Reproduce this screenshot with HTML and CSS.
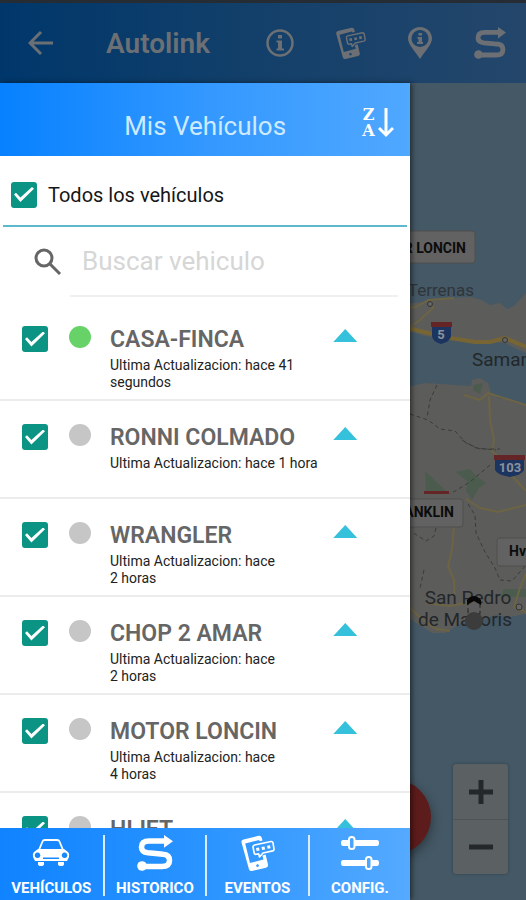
FILE: index.html
```html
<!DOCTYPE html>
<html lang="es">
<head>
    <meta charset="UTF-8">
    <meta name="viewport" content="width=device-width, initial-scale=1.0">
    <title>Autolink - Mis Vehículos</title>
    <link rel="stylesheet" href="styles.css">
</head>
<body>
    <!-- Shared icons -->
    <svg class="sprite" aria-hidden="true">
        <symbol id="icon-phone" viewBox="0 0 36 36">
            <path fill="currentColor" fill-rule="evenodd" d="M4.500 4.500 L19.500 .8 Q22 .3 22.700 2.500 L23.500 5.500 L20.500 6.300 L20.200 5 L6.200 8.600 L11 28 L24.500 24.600 L23.400 20.500 L26.600 19.500 L29 29.500 Q29.500 32 27 32.700 L13 36 Q10.500 36.400 9.900 34 L2.500 7.500 Q2 5.200 4.500 4.500 Z M18.500 29.200 a1.400 1.400 0 1 0 .1 0 Z"/>
            <path fill="none" stroke="currentColor" stroke-width="1.600" stroke-linejoin="round" d="M15.500 10 L32 6.500 Q33.600 6.300 34 7.800 L35 14 Q35.200 15.500 33.700 15.900 L24 18 L20.500 22 L19.700 18.900 L17 19.300 Q15.500 19.500 15.200 18 L14 12 Q13.800 10.500 15.500 10 Z"/>
            <path fill="currentColor" d="M17 13 l3 -.6 .6 3 -3 .6 Z M22.500 12 l3 -.6 .6 3 -3 .6 Z M28 10.800 l3 -.6 .6 3 -3 .6 Z"/>
        </symbol>
        <symbol id="icon-route" viewBox="0 0 36 36">
            <path fill="none" stroke="currentColor" stroke-width="5.500" d="M5 31.500 H25 Q32.500 31.500 32.500 25.500 Q32.500 19.500 26 19.200 L11 17.800 Q4.500 17 4.500 12.200 Q4.500 6 12 6 H29"/>
            <circle cx="5" cy="31" r="4.800" fill="currentColor"/>
            <path fill="currentColor" d="M27 0 L36 6.200 L27 12.800 Z"/>
        </symbol>
    </svg>

    <header class="topbar">
        <button class="icon-btn back" aria-label="Volver">
            <svg viewBox="0 0 26 26"><path d="M25 13 H2 M13 2 L2 13 L13 24"/></svg>
        </button>
        <h1>Autolink</h1>
        <nav class="actions">
            <button class="icon-btn" aria-label="Información">
                <svg viewBox="0 0 32 32">
                    <circle cx="16" cy="16" r="12.500" fill="none" stroke="currentColor" stroke-width="2.500"/>
                    <path fill="currentColor" d="M14 8 h4 v3.500 h-4 Z M12.500 13.500 h5.500 v8 h2 v2 h-7.500 v-2 h1.500 v-6 h-1.500 Z"/>
                </svg>
            </button>
            <button class="icon-btn" aria-label="Mensajes"><svg><use href="#icon-phone"/></svg></button>
            <button class="icon-btn" aria-label="Ubicación">
                <svg viewBox="0 0 32 32">
                    <path fill="currentColor" fill-rule="evenodd" d="M16 0 C22.500 0 28 5 28 11.500 C28 18 20 25 16 32 C12 25 4 18 4 11.500 C4 5 9.500 0 16 0 Z M16 3 a8.500 8.500 0 1 0 .1 0 Z"/>
                    <path fill="currentColor" d="M14.500 6 h3.500 v2.500 h-3.500 Z M13.500 10 h4.500 v5 h1 v2 h-6 v-2 h1.500 v-3 h-1 Z"/>
                </svg>
            </button>
            <button class="icon-btn" aria-label="Recorrido"><svg><use href="#icon-route"/></svg></button>
        </nav>
    </header>

    <main class="content">
        <!-- Map behind the drawer -->
        <svg class="map" viewBox="0 83 526 817" preserveAspectRatio="xMaxYMin slice">
            <path class="land" d="M400 304 L412 303 L430 301 L450 298 L470 297 L482 300 L490 305 L500 303 L507 309 L514 306 L526 293 V353 L519 350 L505 343 L490 342 L478 344 L460 341 L440 338 L425 336 L412 332 L400 331 Z"/>
            <path class="land" d="M400 386 L412 386 L425 383 L440 384 L455 385 L471 386 L472 380 L480 378 L488 383 L491 393 L498 398 L515 401 L526 404 V614 L510 617 L496 615 L484 619 L468 620 L455 627 L445 633 L432 633 L421 626 L410 619 L400 614 Z"/>
            <path class="park" d="M425 471 L446 491 H426 Z M456 472 L470 469 L477 477 L486 483 L479 488 L472 500 L466 490 L468 482 Z M474 385 L483 383 L480 394 L473 390 Z M504 589 H526 V597 H500 Z"/>
            <path class="road" d="M400 326 L420 331 L450 338 L475 342 L490 342 L505 338 L526 347"/>
            <path class="road thin" d="M400 309 L416 307 L428 300 L454 298 M431 300 L433 308 L420 320 L408 328 M464 395 L480 400 L488 393 L526 405 M489 396 L490 420 L494 440 L492 452 L502 458 L512 476 L526 491 M466 499 L480 508 L498 512 L526 505 M454 526 L452 550 L448 566 L454 580 L455 606 M400 597 L414 612 L426 622 L436 629 L450 631 M426 603 L450 606 L470 602 M526 574 L520 588 L514 607 L526 612"/>
            <path class="border-line" d="M410 414 L428 420 L440 429 L455 431 L466 443 L480 449 L500 449 M437 385 L430 400 L427 418 M462 440 L476 448 L496 450 M490 465 L470 482 L450 494 M468 504 L475 515 L476 533 L485 552 L495 568 L500 580 L512 581 L526 565 M436 528 L434 536 L426 541 L412 532 M424 570 L420 588"/>
            <g class="town">
                <circle cx="430" cy="304" r="2.500"/>
                <circle cx="505" cy="340" r="2.500"/>
                <circle cx="519" cy="607" r="3"/>
            </g>
            <!-- Road shields -->
            <g class="shield">
                <path class="shield-blue" d="M432 326 H451 V336 Q451 341 441 344 Q432 341 432 336 Z"/>
                <path class="shield-red" d="M431 322 H452 V327 H431 Z"/>
                <text x="441" y="339">5</text>
                <path class="shield-blue" d="M495 459 H524 V470 Q522 475 510 477 Q497 475 495 470 Z"/>
                <path class="shield-red" d="M494 455 H525 V460 H494 Z"/>
                <text x="510" y="472">103</text>
            </g>
            <path class="shield-red" d="M424 491 H449 V494 H424 Z"/>
            <g class="place">
                <text class="small" x="474" y="296" text-anchor="end">Las Terrenas</text>
                <text x="472" y="366">Samaná</text>
                <text x="468" y="604" text-anchor="middle">San Pedro</text>
                <text x="465" y="626" text-anchor="middle">de Macoris</text>
            </g>
            <g class="vehicle-mark">
                <path d="M468 600 Q474 595 480 600 V614 H468 Z" fill="#5d5d5d" stroke="#222" stroke-dasharray="5 3"/>
                <path d="M467 605 V600 Q474 592 481 600 V605 L474 601 Z" fill="#080808"/>
                <circle cx="474" cy="621" r="9" fill="#3c3c3c"/>
            </g>
            <!-- Vehicle tags -->
            <g class="tag">
                <rect x="370" y="231" width="105" height="32" rx="3"/>
                <text x="466" y="253" text-anchor="end">MOTOR LONCIN</text>
                <rect x="370" y="499" width="93" height="28" rx="3"/>
                <text x="454" y="517" text-anchor="end">FRANKLIN</text>
                <rect x="497" y="538" width="60" height="28" rx="3"/>
                <text x="509" y="556">Hv</text>
            </g>
        </svg>

        <button class="fab" aria-label="Alerta"></button>
        <div class="zoom">
            <button aria-label="Acercar"><svg viewBox="0 0 24 24"><path d="M0 12 H24 M12 0 V24"/></svg></button>
            <button aria-label="Alejar"><svg viewBox="0 0 24 24"><path d="M0 12 H24"/></svg></button>
        </div>

        <aside class="drawer">
            <div class="drawer-header">
                <h2>Mis Vehículos</h2>
                <button class="sort" aria-label="Ordenar">
                    <span class="sort-letters"><span>Z</span><span>A</span></span>
                    <svg viewBox="0 0 16 32"><path d="M8 1 V28 M1 21 L8 28 L15 21"/></svg>
                </button>
            </div>

            <label class="all">
                <input type="checkbox" checked>
                Todos los vehículos
            </label>

            <div class="search">
                <svg viewBox="0 0 28 28"><circle cx="10" cy="10" r="8"/><path d="M16 16 L26 26"/></svg>
                <input type="text" placeholder="Buscar vehiculo" aria-label="Buscar vehiculo">
            </div>

            <ul class="vehicles">
                <li>
                    <input type="checkbox" id="v1" checked>
                    <span class="dot online"></span>
                    <label for="v1"><b>CASA-FINCA</b>Ultima Actualizacion: hace 41<br>segundos</label>
                    <button class="toggle" aria-label="Mostrar CASA-FINCA"></button>
                </li>
                <li>
                    <input type="checkbox" id="v2" checked>
                    <span class="dot"></span>
                    <label for="v2"><b>RONNI COLMADO</b>Ultima Actualizacion: hace 1 hora</label>
                    <button class="toggle" aria-label="Mostrar RONNI COLMADO"></button>
                </li>
                <li>
                    <input type="checkbox" id="v3" checked>
                    <span class="dot"></span>
                    <label for="v3"><b>WRANGLER</b>Ultima Actualizacion: hace<br>2 horas</label>
                    <button class="toggle" aria-label="Mostrar WRANGLER"></button>
                </li>
                <li>
                    <input type="checkbox" id="v4" checked>
                    <span class="dot"></span>
                    <label for="v4"><b>CHOP 2 AMAR</b>Ultima Actualizacion: hace<br>2 horas</label>
                    <button class="toggle" aria-label="Mostrar CHOP 2 AMAR"></button>
                </li>
                <li>
                    <input type="checkbox" id="v5" checked>
                    <span class="dot"></span>
                    <label for="v5"><b>MOTOR LONCIN</b>Ultima Actualizacion: hace<br>4 horas</label>
                    <button class="toggle" aria-label="Mostrar MOTOR LONCIN"></button>
                </li>
                <li>
                    <input type="checkbox" id="v6" checked>
                    <span class="dot"></span>
                    <label for="v6"><b>HIJET</b></label>
                    <button class="toggle" aria-label="Mostrar HIJET"></button>
                </li>
            </ul>

            <nav class="tabs">
                <a href="#vehiculos">
                    <svg viewBox="0 0 38 36">
                        <path fill="none" stroke="currentColor" stroke-width="1.800" d="M7 15 L10.500 6.500 Q11 5 13 5 H25 Q27 5 27.500 6.500 L31 15"/>
                        <path fill="currentColor" fill-rule="evenodd" d="M6 14 H32 L36 17 Q38 19 37 22 L35 26 H3 L1 22 Q0 19 2 17 Z M5.500 17.500 a2.800 2.800 0 1 0 .1 0 Z M32.500 17.500 a2.800 2.800 0 1 0 .1 0 Z M11 22.500 V24 H27 V22.500 Z"/>
                        <path fill="currentColor" d="M6 27 h6 v2 q0 2 -3 2 q-3 0 -3 -2 Z M26 27 h6 v2 q0 2 -3 2 q-3 0 -3 -2 Z"/>
                    </svg>
                    VEHÍCULOS
                </a>
                <a href="#historico"><svg><use href="#icon-route"/></svg>HISTORICO</a>
                <a href="#eventos"><svg><use href="#icon-phone"/></svg>EVENTOS</a>
                <a href="#config">
                    <svg viewBox="0 0 38 36">
                        <path fill="currentColor" d="M2 5 H8 V11 H2 Q0 11 0 8 Q0 5 2 5 Z M14 5 H36 Q38 5 38 8 Q38 11 36 11 H14 Z M2 25 H24 V31 H2 Q0 31 0 28 Q0 25 2 25 Z M31 25 H36 Q38 25 38 28 Q38 31 36 31 H31 Z"/>
                        <g fill="none" stroke="currentColor" stroke-width="2">
                            <rect x="8" y="2" width="5.500" height="12" rx="2.500"/>
                            <rect x="25" y="22" width="5.500" height="12" rx="2.500"/>
                        </g>
                    </svg>
                    CONFIG.
                </a>
            </nav>
        </aside>
    </main>
</body>
</html>
```
FILE: styles.css
```css
* {
    box-sizing: border-box;
}

body {
    margin: 0;
    height: 100vh;
    display: flex;
    flex-direction: column;
    overflow: hidden;
    font-family: Roboto, sans-serif;
    background: #475a66;
}

button {
    padding: 0;
    border: none;
    background: none;
    color: inherit;
    font-family: inherit;
    cursor: pointer;
}

h1, h2 {
    margin: 0;
}

.sprite {
    position: absolute;
    width: 0;
    height: 0;
}

/* Top bar */
.topbar {
    flex: none;
    display: flex;
    align-items: center;
    height: 83px;
    padding: 0 20px 0 28px;
    border-top: 3px solid #262c33;
    background: linear-gradient(to right, #00376b, #13406a 50%, #24466b);
    color: #6c7074;
}

.topbar h1 {
    margin-left: 52px;
    font-size: 28px;
    font-weight: 600;
}

.actions {
    display: flex;
    gap: 38px;
    margin-left: auto;
}

.icon-btn svg {
    display: block;
    width: 32px;
    height: 32px;
}

.back svg {
    width: 26px;
    height: 26px;
    fill: none;
    stroke: currentColor;
    stroke-width: 3;
}

.content {
    flex: 1;
    min-height: 0;
    position: relative;
}

/* Map */
.map {
    position: absolute;
    top: 0;
    left: 0;
    width: 100%;
    height: 100%;
    background: #445865;
}

.land {
    fill: #5c5c5a;
}

.park {
    fill: #4b5c4e;
}

.road {
    fill: none;
    stroke: #776634;
    stroke-width: 4;
    stroke-linejoin: round;
}

.road.thin {
    stroke: #6d6444;
    stroke-width: 2;
}

.border-line {
    fill: none;
    stroke: #3b3b3b;
    stroke-width: 1;
    stroke-dasharray: 4 3;
}

.town {
    fill: #666;
    stroke: #333;
    stroke-width: 1;
}

.shield-blue {
    fill: #1c3560;
}

.shield-red {
    fill: #652426;
}

.shield text {
    fill: #8d9299;
    font-size: 13px;
    font-weight: 700;
    text-anchor: middle;
}

.place {
    fill: #23272b;
    font-size: 19px;
}

.place .small {
    font-size: 17px;
    fill: #30353a;
}

.tag rect {
    fill: #626262;
    stroke: #4f4f4f;
}

.tag text {
    fill: #0c0c0c;
    font-size: 14px;
    font-weight: 700;
}

.fab {
    position: absolute;
    right: 95px;
    bottom: 45px;
    width: 76px;
    height: 76px;
    border-radius: 50%;
    background: #5c1c1b;
    box-shadow: 0 4px 12px rgba(0, 0, 0, 0.4);
}

.zoom {
    position: absolute;
    right: 18px;
    bottom: 26px;
    width: 55px;
    border-radius: 3px;
    background: #5b6063;
    box-shadow: 0 0 3px rgba(0, 0, 0, 0.3);
}

.zoom button {
    display: flex;
    align-items: center;
    justify-content: center;
    width: 100%;
    height: 55px;
}

.zoom button + button {
    border-top: 1px solid #4e5356;
}

.zoom svg {
    width: 24px;
    height: 24px;
    stroke: #25282a;
    stroke-width: 5;
}

/* Drawer */
.drawer {
    position: relative;
    display: flex;
    flex-direction: column;
    width: 78%;
    height: 100%;
    background: #fff;
    box-shadow: 2px 0 5px rgba(0, 0, 0, 0.5);
}

.drawer-header {
    flex: none;
    display: grid;
    grid-template-columns: 48px 1fr 48px;
    align-items: center;
    height: 73px;
    background: linear-gradient(to right, #0781ff, #3398ff 50%, #50a8ff);
}

.drawer-header h2 {
    grid-column: 2;
    padding-top: 12px;
    color: #cdeaff;
    font-size: 26px;
    font-weight: 400;
    text-align: center;
}

.sort {
    display: flex;
    align-items: center;
    gap: 3px;
    padding-top: 6px;
    color: #fff;
}

.sort-letters {
    display: flex;
    flex-direction: column;
    font-family: "DejaVu Serif", serif;
    font-size: 16px;
    font-weight: 700;
    line-height: 16px;
    text-align: center;
}

.sort svg {
    width: 16px;
    height: 32px;
    fill: none;
    stroke: currentColor;
    stroke-width: 3;
}

input[type="checkbox"] {
    appearance: none;
    flex: none;
    display: grid;
    place-content: center;
    width: 26px;
    height: 26px;
    margin: 0;
    border-radius: 3px;
    background: #0b9384;
}

input[type="checkbox"]:checked::after {
    content: "";
    width: 20px;
    height: 15px;
    background: #fff;
    clip-path: polygon(0 50%, 10% 38%, 32% 70%, 90% 0, 100% 12%, 32% 100%);
}

.all {
    flex: none;
    display: flex;
    align-items: center;
    gap: 11px;
    height: 71px;
    margin: 0 3px;
    padding: 8px 8px 0;
    border-bottom: 2px solid #5fb9cc;
    color: #161616;
    font-size: 20px;
}

.search {
    flex: none;
    display: flex;
    align-items: center;
    gap: 8px;
    height: 76px;
    padding: 0 12px 6px 34px;
}

.search svg {
    flex: none;
    width: 28px;
    height: 28px;
    fill: none;
    stroke: #666;
    stroke-width: 3;
}

.search input {
    flex: 1;
    min-width: 0;
    height: 70px;
    padding: 0 12px;
    border: none;
    border-bottom: 2px solid #f0f0f0;
    background: none;
    color: #333;
    font-family: inherit;
    font-size: 26px;
}

.search input::placeholder {
    color: #d6d6d6;
}

.vehicles {
    flex: 1;
    min-height: 0;
    margin: 0;
    padding: 0;
    overflow: hidden;
    list-style: none;
}

.vehicles li {
    display: flex;
    align-items: flex-start;
    height: 98px;
    padding: 23px 53px 0 22px;
    border-bottom: 2px solid #ececec;
}

.dot {
    flex: none;
    width: 22px;
    height: 22px;
    margin: 0 19px 0 21px;
    border-radius: 50%;
    background: #c6c6c6;
}

.dot.online {
    background: #66d267;
}

.vehicles label {
    flex: 1;
    white-space: nowrap;
    color: #222;
    font-size: 14px;
    line-height: 17px;
}

.vehicles b {
    display: block;
    padding-bottom: 3px;
    color: #666;
    font-size: 23px;
    font-weight: 600;
    line-height: 28px;
}

.toggle {
    width: 24px;
    height: 13px;
    margin-top: 3px;
    background: #35c0dc;
    clip-path: polygon(50% 0, 100% 100%, 0 100%);
}

/* Bottom tabs */
.tabs {
    flex: none;
    display: grid;
    grid-template-columns: repeat(4, 1fr);
    height: 72px;
    padding: 7px 0 4px;
    background: linear-gradient(to right, #1083ff, #2a94ff 50%, #55aaff);
}

.tabs a {
    display: flex;
    flex-direction: column;
    align-items: center;
    justify-content: space-between;
    color: #fff;
    font-size: 15px;
    font-weight: 700;
    line-height: 16px;
    text-decoration: none;
}

.tabs a + a {
    border-left: 2px solid #d9ecff;
}

.tabs svg {
    width: 38px;
    height: 36px;
}
```
